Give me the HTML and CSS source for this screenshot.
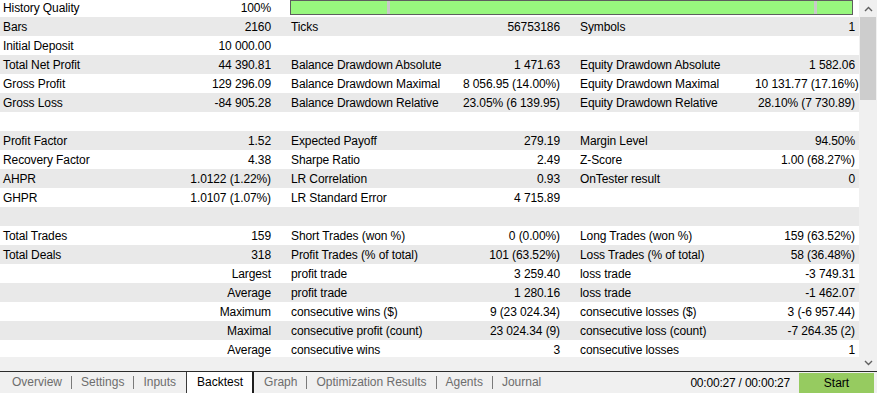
FILE: index.html
```html
<!DOCTYPE html>
<html lang="en">
<head>
    <meta charset="UTF-8">
    <meta name="viewport" content="width=device-width, initial-scale=1.0">
    <title>Strategy Tester - Backtest</title>
    <link rel="stylesheet" href="styles.css">
</head>
<body>
    <div class="main">
        <div class="report">
            <div class="rows">
                <div class="row first">
                    <div class="lbl">History Quality</div><div class="val">100%</div>
                    <div class="quality">
                        <div class="quality-bar">
                            <span class="mark mark-a"></span>
                            <span class="mark mark-b"></span>
                        </div>
                    </div>
                </div>
                <div class="row">
                    <div class="lbl">Bars</div><div class="val">2160</div>
                    <div class="lbl">Ticks</div><div class="val">56753186</div>
                    <div class="lbl">Symbols</div><div class="val">1</div>
                </div>
                <div class="row">
                    <div class="lbl">Initial Deposit</div><div class="val">10 000.00</div>
                    <div class="lbl"></div><div class="val"></div>
                    <div class="lbl"></div><div class="val"></div>
                </div>
                <div class="row">
                    <div class="lbl">Total Net Profit</div><div class="val">44 390.81</div>
                    <div class="lbl">Balance Drawdown Absolute</div><div class="val">1 471.63</div>
                    <div class="lbl">Equity Drawdown Absolute</div><div class="val">1 582.06</div>
                </div>
                <div class="row">
                    <div class="lbl">Gross Profit</div><div class="val">129 296.09</div>
                    <div class="lbl">Balance Drawdown Maximal</div><div class="val">8 056.95 (14.00%)</div>
                    <div class="lbl">Equity Drawdown Maximal</div><div class="val">10 131.77 (17.16%)</div>
                </div>
                <div class="row">
                    <div class="lbl">Gross Loss</div><div class="val">-84 905.28</div>
                    <div class="lbl">Balance Drawdown Relative</div><div class="val">23.05% (6 139.95)</div>
                    <div class="lbl">Equity Drawdown Relative</div><div class="val">28.10% (7 730.89)</div>
                </div>
                <div class="row"></div>
                <div class="row">
                    <div class="lbl">Profit Factor</div><div class="val">1.52</div>
                    <div class="lbl">Expected Payoff</div><div class="val">279.19</div>
                    <div class="lbl">Margin Level</div><div class="val">94.50%</div>
                </div>
                <div class="row">
                    <div class="lbl">Recovery Factor</div><div class="val">4.38</div>
                    <div class="lbl">Sharpe Ratio</div><div class="val">2.49</div>
                    <div class="lbl">Z-Score</div><div class="val">1.00 (68.27%)</div>
                </div>
                <div class="row">
                    <div class="lbl">AHPR</div><div class="val">1.0122 (1.22%)</div>
                    <div class="lbl">LR Correlation</div><div class="val">0.93</div>
                    <div class="lbl">OnTester result</div><div class="val">0</div>
                </div>
                <div class="row">
                    <div class="lbl">GHPR</div><div class="val">1.0107 (1.07%)</div>
                    <div class="lbl">LR Standard Error</div><div class="val">4 715.89</div>
                    <div class="lbl"></div><div class="val"></div>
                </div>
                <div class="row"></div>
                <div class="row">
                    <div class="lbl">Total Trades</div><div class="val">159</div>
                    <div class="lbl">Short Trades (won %)</div><div class="val">0 (0.00%)</div>
                    <div class="lbl">Long Trades (won %)</div><div class="val">159 (63.52%)</div>
                </div>
                <div class="row">
                    <div class="lbl">Total Deals</div><div class="val">318</div>
                    <div class="lbl">Profit Trades (% of total)</div><div class="val">101 (63.52%)</div>
                    <div class="lbl">Loss Trades (% of total)</div><div class="val">58 (36.48%)</div>
                </div>
                <div class="row">
                    <div class="lbl"></div><div class="val">Largest</div>
                    <div class="lbl">profit trade</div><div class="val">3 259.40</div>
                    <div class="lbl">loss trade</div><div class="val">-3 749.31</div>
                </div>
                <div class="row">
                    <div class="lbl"></div><div class="val">Average</div>
                    <div class="lbl">profit trade</div><div class="val">1 280.16</div>
                    <div class="lbl">loss trade</div><div class="val">-1 462.07</div>
                </div>
                <div class="row">
                    <div class="lbl"></div><div class="val">Maximum</div>
                    <div class="lbl">consecutive wins ($)</div><div class="val">9 (23 024.34)</div>
                    <div class="lbl">consecutive losses ($)</div><div class="val">3 (-6 957.44)</div>
                </div>
                <div class="row">
                    <div class="lbl"></div><div class="val">Maximal</div>
                    <div class="lbl">consecutive profit (count)</div><div class="val">23 024.34 (9)</div>
                    <div class="lbl">consecutive loss (count)</div><div class="val">-7 264.35 (2)</div>
                </div>
                <div class="row">
                    <div class="lbl"></div><div class="val">Average</div>
                    <div class="lbl">consecutive wins</div><div class="val">3</div>
                    <div class="lbl">consecutive losses</div><div class="val">1</div>
                </div>
            </div>
        </div>

        <div class="vscroll">
            <div class="arrow">
                <svg width="9" height="6" viewBox="0 0 9 6"><path d="M1 5 L4.5 1.5 L8 5" fill="none" stroke="#606060" stroke-width="1.4"/></svg>
            </div>
            <div class="thumb"></div>
            <div class="track"></div>
            <div class="arrow">
                <svg width="9" height="6" viewBox="0 0 9 6"><path d="M1 1 L4.5 4.5 L8 1" fill="none" stroke="#606060" stroke-width="1.4"/></svg>
            </div>
        </div>
    </div>

    <div class="tabs">
        <div class="tab">Overview</div>
        <span class="sep"></span>
        <div class="tab">Settings</div>
        <span class="sep"></span>
        <div class="tab">Inputs</div>
        <div class="tab active">Backtest</div>
        <div class="tab">Graph</div>
        <span class="sep"></span>
        <div class="tab">Optimization Results</div>
        <span class="sep"></span>
        <div class="tab">Agents</div>
        <span class="sep"></span>
        <div class="tab">Journal</div>

        <div class="status">
            <span class="time">00:00:27 / 00:00:27</span>
            <button class="start">Start</button>
        </div>
    </div>
</body>
</html>
```

FILE: styles.css
```css
* {
    margin: 0;
    padding: 0;
    box-sizing: border-box;
}

body {
    width: 877px;
    height: 393px;
    overflow: hidden;
    background: #f0f0f0;
    font-family: 'Liberation Sans', Arial, sans-serif;
    font-size: 12px;
    color: #000;
}

.main {
    display: flex;
    height: 371px;
}

.report {
    width: 859px;
    height: 357px;
    overflow: hidden;
    background: #fff;
}

.rows {
    margin-top: -2px;
}

.row {
    display: grid;
    grid-template-columns: 183px 88px 190px 99px 195px 100px;
    height: 19px;
    line-height: 19px;
    white-space: nowrap;
    letter-spacing: -0.1px;
}

.row:nth-child(even) {
    background: #e9e9e9;
}

.lbl,
.val {
    padding-top: 1px;
}

.lbl {
    padding-left: 20px;
}

.row .lbl:first-child {
    padding-left: 3px;
}

.val {
    text-align: right;
}

.quality {
    grid-column: 3 / 7;
    padding: 2px 2px 0 19px;
}

.quality-bar {
    position: relative;
    height: 15px;
    background: #98f77e;
    border: 1px solid #5e5e5e;
}

.mark {
    position: absolute;
    top: 0;
    bottom: 0;
    width: 3px;
    background: #c9c9c9;
}

.mark-a {
    left: 96px;
}

.mark-b {
    left: 523px;
}

.vscroll {
    width: 18px;
    height: 371px;
    background: #f0f0f0;
    display: flex;
    flex-direction: column;
}

.arrow {
    height: 17px;
    display: flex;
    justify-content: center;
    align-items: center;
}

.thumb {
    height: 83px;
    margin: 0 1px;
    background: #cdcdcd;
}

.track {
    flex: 1;
}

.tabs {
    display: flex;
    align-items: center;
    height: 22px;
    border-top: 1px solid #2b2b2b;
    padding-left: 3px;
}

.tab {
    padding: 0 9px;
    color: #6d6d6d;
    height: 21px;
    line-height: 20px;
}

.tab.active {
    color: #000;
    background: #fff;
    border-left: 1px solid #3a3a3a;
    border-right: 2px solid #1e1e1e;
    padding: 0 9px 0 10px;
    margin: 0 1px;
}

.sep {
    width: 1px;
    height: 13px;
    background: #7a7a7a;
}

.status {
    margin-left: auto;
    display: flex;
    align-items: center;
    height: 21px;
}

.time {
    margin-right: 9px;
    letter-spacing: -0.2px;
}

.start {
    width: 75px;
    height: 20px;
    margin-top: 1px;
    margin-right: 3px;
    border: none;
    background: #96cb60;
    font-family: 'Liberation Sans', Arial, sans-serif;
    font-size: 12px;
    color: #000;
}
```
